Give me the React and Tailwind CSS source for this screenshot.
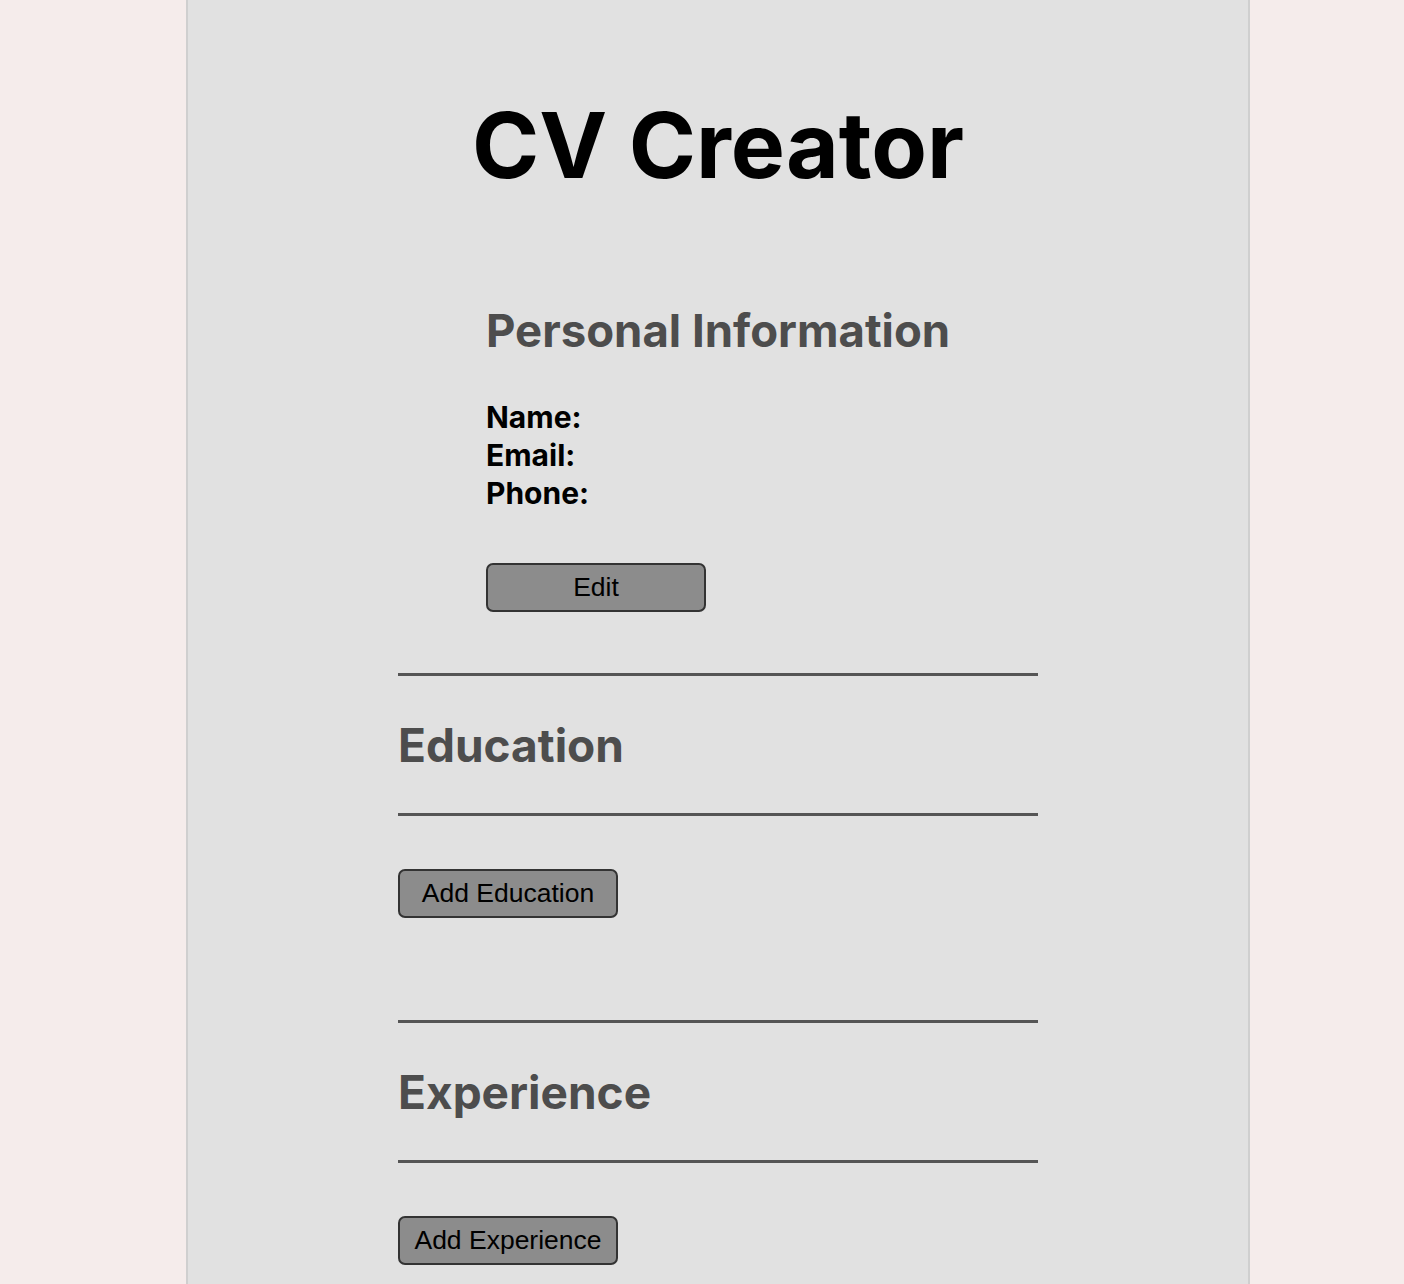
export default function App() {
  return (
    <div className="min-h-screen w-full bg-[#f5eceb] font-['Inter',sans-serif]">
      <div className="ml-[186px] min-h-[1284px] w-[1064px] border-x-2 border-[#cfcfcf] bg-[#e1e1e1]">
        <h1 className="pt-[88px] text-center text-[91px] font-bold leading-[115px] text-black">
          CV Creator
        </h1>

        <div className="mx-auto mt-[100px] w-[640px]">
          <section className="px-[88px] pb-[61px]">
            <h2 className="whitespace-nowrap text-[45.5px] font-bold leading-[55px] text-[#4d4d4d]">
              Personal Information
            </h2>
            <div className="mt-[40px] text-[30px] font-bold leading-[38px] text-black">
              <p>Name:</p>
              <p>Email:</p>
              <p>Phone:</p>
            </div>
            <button className="mt-[51px] h-[49px] w-[220px] rounded-[7px] border-2 border-[#333] bg-[#8c8c8c] font-['Liberation_Sans',sans-serif] text-[26.5px] text-black">
              Edit
            </button>
          </section>

          <section>
            <div className="h-[3px] bg-[#555]" />
            <h2 className="pt-[40px] pb-[39px] text-[46px] font-bold leading-[58px] text-[#4d4d4d]">
              Education
            </h2>
            <div className="h-[3px] bg-[#555]" />
            <button className="mt-[53px] h-[49px] w-[220px] rounded-[7px] border-2 border-[#333] bg-[#8c8c8c] font-['Liberation_Sans',sans-serif] text-[26.5px] text-black">
              Add Education
            </button>
          </section>

          <section className="mt-[102px]">
            <div className="h-[3px] bg-[#555]" />
            <h2 className="pt-[40px] pb-[39px] text-[46px] font-bold leading-[58px] text-[#4d4d4d]">
              Experience
            </h2>
            <div className="h-[3px] bg-[#555]" />
            <button className="mt-[53px] h-[49px] w-[220px] rounded-[7px] border-2 border-[#333] bg-[#8c8c8c] font-['Liberation_Sans',sans-serif] text-[26.5px] text-black">
              Add Experience
            </button>
          </section>
        </div>
      </div>
    </div>
  );
}
